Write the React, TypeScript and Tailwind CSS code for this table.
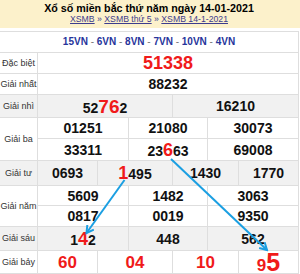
import React from 'react';

const line = 'border-[#dedede]';

function Cell({ w, children }: { w: string; children?: React.ReactNode }) {
  return (
    <div className={`${w} h-full flex items-center justify-center border-l ${line}`}>{children}</div>
  );
}

function Num({ children }: { children: React.ReactNode }) {
  return <span className="text-[14px] font-bold text-[#111] leading-none">{children}</span>;
}

function Big({ children, size = 'text-[19px]' }: { children: React.ReactNode; size?: string }) {
  return <span className={`${size} font-bold text-[#f01a1a] leading-none`}>{children}</span>;
}

function Row({
  label,
  gray,
  rows,
}: {
  label: string;
  gray?: boolean;
  rows: { h: string; cells: React.ReactNode }[];
}) {
  return (
    <div className={`flex border-b ${line} ${gray ? 'bg-[#f1f1f1]' : ''}`}>
      <div className="w-[37px] shrink-0 flex items-center justify-center whitespace-nowrap text-[9px] text-[#333] leading-[11px]">
        {label}
      </div>
      <div className="flex-1 flex flex-col">
        {rows.map((r, i) => (
          <div key={i} className={`${r.h} flex ${i < rows.length - 1 ? `border-b ${line}` : ''}`}>
            {r.cells}
          </div>
        ))}
      </div>
    </div>
  );
}

const c2 = ['w-[135px]', 'w-[126px]'];
const c3 = ['w-[91px]', 'w-[79px]', 'w-[91px]'];
const c4 = ['w-[60px]', 'w-[75px]', 'w-[66px]', 'w-[60px]'];

const codes = ['15VN', '6VN', '8VN', '7VN', '10VN', '4VN'];

export default function App() {
  return (
    <div className="relative w-[300px] h-[274px] overflow-hidden bg-white font-['Liberation_Sans_Narrow','Liberation_Sans',Arial,sans-serif]">
      <div className="h-[28px] bg-[#fcf1cb] flex flex-col items-center pt-[2px] pr-[2px]">
        <div className="text-[10.7px] font-bold leading-[12px] text-black">
          Xổ số miền bắc thứ năm ngày 14-01-2021
        </div>
        <div className="text-[8.7px] leading-[11px] text-[#3c3c8e]">
          <a className="underline">XSMB</a> » <a className="underline">XSMB thứ 5</a> »{' '}
          <a className="underline">XSMB 14-1-2021</a>
        </div>
      </div>

      <div className={`mt-[3px] w-[299px] border-t border-r ${line}`}>
        <div className={`h-[21px] pt-[4px] text-center leading-[12px] border-b ${line} text-[10px] font-bold whitespace-pre`}>
          {codes.map((c, i) => (
            <React.Fragment key={c}>
              {i > 0 && <span className="text-[#777] font-normal"> - </span>}
              <span className="text-[#26349b]">{c}</span>
            </React.Fragment>
          ))}
        </div>

        <Row
          label="Đặc biệt"
          rows={[{ h: 'h-[20px]', cells: <Cell w="w-[261px]"><Big size="text-[18px]">51338</Big></Cell> }]}
        />
        <Row
          label="Giải nhất"
          rows={[{ h: 'h-[20px]', cells: <Cell w="w-[261px]"><Num>88232</Num></Cell> }]}
        />
        <Row
          label="Giải nhì"
          gray
          rows={[
            {
              h: 'h-[22px]',
              cells: (
                <>
                  <Cell w={c2[0]}>
                    <Num>
                      52<Big>76</Big>2
                    </Num>
                  </Cell>
                  <Cell w={c2[1]}><Num>16210</Num></Cell>
                </>
              ),
            },
          ]}
        />
        <Row
          label="Giải ba"
          rows={[
            {
              h: 'h-[21px]',
              cells: (
                <>
                  <Cell w={c3[0]}><Num>01251</Num></Cell>
                  <Cell w={c3[1]}><Num>21080</Num></Cell>
                  <Cell w={c3[2]}><Num>30073</Num></Cell>
                </>
              ),
            },
            {
              h: 'h-[21px]',
              cells: (
                <>
                  <Cell w={c3[0]}><Num>33311</Num></Cell>
                  <Cell w={c3[1]}>
                    <Num>
                      23<Big size="text-[18px]">6</Big>63
                    </Num>
                  </Cell>
                  <Cell w={c3[2]}><Num>69008</Num></Cell>
                </>
              ),
            },
          ]}
        />
        <Row
          label="Giải tư"
          gray
          rows={[
            {
              h: 'h-[24px]',
              cells: (
                <>
                  <Cell w={c4[0]}><Num>0693</Num></Cell>
                  <Cell w={c4[1]}>
                    <Num>
                      <Big size="text-[18px]">1</Big>495
                    </Num>
                  </Cell>
                  <Cell w={c4[2]}><Num>1430</Num></Cell>
                  <Cell w={c4[3]}><Num>1770</Num></Cell>
                </>
              ),
            },
          ]}
        />
        <Row
          label="Giải năm"
          rows={[
            {
              h: 'h-[20px]',
              cells: (
                <>
                  <Cell w={c3[0]}><Num>5609</Num></Cell>
                  <Cell w={c3[1]}><Num>1482</Num></Cell>
                  <Cell w={c3[2]}><Num>3063</Num></Cell>
                </>
              ),
            },
            {
              h: 'h-[20px]',
              cells: (
                <>
                  <Cell w={c3[0]}><Num>0817</Num></Cell>
                  <Cell w={c3[1]}><Num>0019</Num></Cell>
                  <Cell w={c3[2]}><Num>9350</Num></Cell>
                </>
              ),
            },
          ]}
        />
        <Row
          label="Giải sáu"
          gray
          rows={[
            {
              h: 'h-[23px]',
              cells: (
                <>
                  <Cell w={c3[0]}>
                    <Num>
                      1<Big size="text-[18px]">4</Big>2
                    </Num>
                  </Cell>
                  <Cell w={c3[1]}><Num>448</Num></Cell>
                  <Cell w={c3[2]}><Num>562</Num></Cell>
                </>
              ),
            },
          ]}
        />
        <Row
          label="Giải bảy"
          rows={[
            {
              h: 'h-[22px]',
              cells: (
                <>
                  <Cell w={c4[0]}><Big size="text-[17px]">60</Big></Cell>
                  <Cell w={c4[1]}><Big size="text-[17px]">04</Big></Cell>
                  <Cell w={c4[2]}><Big size="text-[17px]">10</Big></Cell>
                  <Cell w={c4[3]}>
                    <Big size="text-[17px]">
                      9<span className="text-[25px]">5</span>
                    </Big>
                  </Cell>
                </>
              ),
            },
          ]}
        />
      </div>

      {/* mũi tên cầu */}
      <svg className="absolute inset-0 pointer-events-none" width="300" height="274">
        <defs>
          <marker id="ah" viewBox="0 0 10 10" refX="8" refY="5" markerWidth="5" markerHeight="5" orient="auto">
            <path d="M1 1 L8 5 L1 9" fill="none" stroke="#1b9fe2" strokeWidth="2" />
          </marker>
        </defs>
        <line x1="124.5" y1="180" x2="86.5" y2="233" stroke="#1b9fe2" strokeWidth="2" markerEnd="url(#ah)" />
        <line x1="171" y1="159" x2="267" y2="250" stroke="#1b9fe2" strokeWidth="2" markerEnd="url(#ah)" />
      </svg>
    </div>
  );
}
